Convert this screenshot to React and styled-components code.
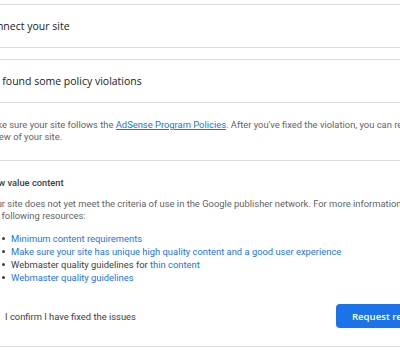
import React from 'react'
import styled, { createGlobalStyle } from 'styled-components'

const colors = {
    border: '#dadce0',
    title: '#202124',
    text: '#5f6368',
    dark: '#3c4043',
    link: '#1a73e8',
    button: '#1a73e8',
};

const GlobalStyle = createGlobalStyle`
    html, body {
        margin: 0;
        padding: 0;
        background: #ffffff;
        overflow: hidden;
    }
`;

const Page = styled.div`
    width: 487px;
    margin-left: -30px;
    padding-top: 4px;
    font-family: Roboto, "Liberation Sans", sans-serif;
`;

const Card = styled.div`
    border: 1px solid ${colors.border};
    background: #fff;
    margin-top: ${props => props.gap || 0}px;
`;

const Header = styled.div`
    height: 42px;
    display: flex;
    align-items: center;
    padding: 0 13px;
    font-family: "Open Sans", sans-serif;
    font-weight: 500;
    font-size: 10.5px;
    color: ${colors.title};
    border-bottom: ${props => props.divided ? `1px solid ${colors.border}` : 'none'};
`;

const Section = styled.div`
    padding: ${props => props.pad};
    border-bottom: ${props => props.divided ? `1px solid ${colors.border}` : 'none'};
    font-size: 9.4px;
    line-height: 12px;
    color: ${colors.text};
    white-space: nowrap;
`;

const SubTitle = styled.div`
    font-weight: 500;
    font-size: 9.3px;
    color: ${colors.dark};
    margin: 0 0 9px 2px;
`;

const Link = styled.a`
    color: ${colors.link};
    text-decoration: ${props => props.underline ? 'underline' : 'none'};
`;

const List = styled.ul`
    list-style: none;
    margin: 10px 0 0;
    padding-left: 16px;
    line-height: 13px;
    color: ${colors.dark};
`;

const Item = styled.li`
    display: flex;
    align-items: center;
    gap: 6px;
`;

const Dot = styled.span`
    width: 3px;
    height: 3px;
    border-radius: 50%;
    background: ${colors.dark};
    flex-shrink: 0;
`;

const Footer = styled.div`
    display: flex;
    align-items: center;
    padding: 20px 17px 18px;
`;

const Confirm = styled.label`
    display: flex;
    align-items: center;
    gap: 8px;
    font-size: 9.4px;
    color: ${colors.dark};
    flex: 1;
`;

const Box = styled.span`
    width: 10px;
    height: 10px;
    border: 1.5px solid #5f6368;
    border-radius: 2px;
    margin-left: -3px;
`;

const Button = styled.button`
    height: 24px;
    border: none;
    border-radius: 4px;
    background: ${colors.button};
    color: #fff;
    font-family: "Open Sans", sans-serif;
    font-weight: 600;
    font-size: 9.6px;
    padding: 0 16px;
    white-space: nowrap;
`;

const resources = [
    { link: 'Minimum content requirements' },
    { link: 'Make sure your site has unique high quality content and a good user experience' },
    { prefix: 'Webmaster quality guidelines for ', link: 'thin content' },
    { link: 'Webmaster quality guidelines' },
];

export default function App() {
    return (
        <Page>
            <GlobalStyle />
            <Card>
                <Header>Connect your site</Header>
            </Card>
            <Card gap={11}>
                <Header divided>We found some policy violations</Header>
                <Section divided pad="16px 13px 17px">
                    Make sure your site follows the <Link underline href="#">AdSense Program Policies</Link>. After you've fixed the violation, you can request a<br />
                    review of your site.
                </Section>
                <Section pad="16px 15px 0">
                    <SubTitle>Low value content</SubTitle>
                    Your site does not yet meet the criteria of use in the Google publisher network. For more information, see<br />
                    the following resources:
                    <List>
                        {resources.map((item) => (
                            <Item key={item.link + (item.prefix || '')}>
                                <Dot />
                                <span>{item.prefix}<Link href="#">{item.link}</Link></span>
                            </Item>
                        ))}
                    </List>
                </Section>
                <Footer>
                    <Confirm>
                        <Box />
                        I confirm I have fixed the issues
                    </Confirm>
                    <Button>Request review</Button>
                </Footer>
            </Card>
        </Page>
    );
}
